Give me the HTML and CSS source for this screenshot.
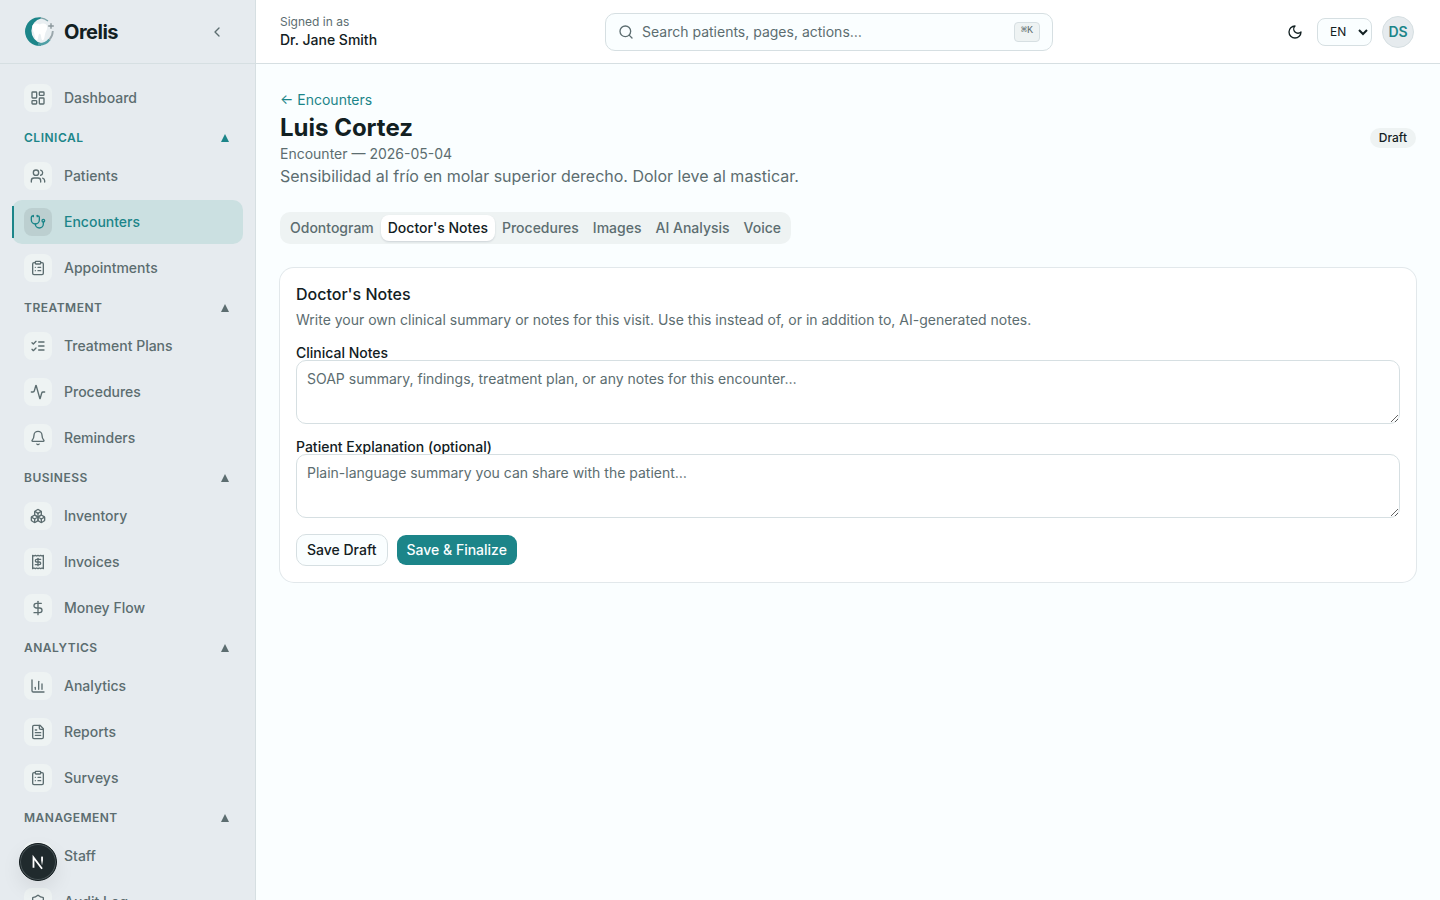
FILE: index.html
```html
<!DOCTYPE html>
<html lang="en">
<head>
  <meta charset="UTF-8">
  <meta name="viewport" content="width=device-width, initial-scale=1.0">
  <title>Orelis - Encounter</title>
  <link rel="stylesheet" href="styles.css">
</head>
<body>
  <div class="app">
    <aside class="sidebar">
      <div class="brand">
        <svg class="logo" viewBox="0 0 32 32" aria-hidden="true">
          <circle cx="16" cy="15" r="12" fill="#eaeff2"/>
          <path d="M17 1.300A14.300 14.300 0 1 0 17 29.700L17 27A12 12.500 0 0 1 17 2.500Z" fill="#1c8589"/>
          <path d="M14 28.300A13 13 0 0 0 25.500 23.500" fill="none" stroke="#4f9fa5" stroke-width="2.600"/>
          <path d="M25.300 23.800A13.400 13.400 0 0 0 28.800 15" fill="none" stroke="#9aa6ab" stroke-width="1.800"/>
          <path d="M16.500 1.900A13.800 13.800 0 0 1 24 5" fill="none" stroke="#7fa5aa" stroke-width="1.100"/>
          <path d="M15.700 8.500C13.500 7 8.500 6.800 8.200 11c-.2 2.800 1.600 4.500 2.200 7.300.5 2.600.8 6 2.300 6 1.800 0 1.200-6.500 3-6.500s1.200 6.500 3 6.500c1.500 0 1.800-3.400 2.300-6 .6-2.800 2.400-4.500 2.200-7.300-.3-4.200-5.300-4-7.500-2.500z" fill="#fff"/>
          <path d="M27 7.200v5.600M24.200 10h5.600" stroke="#8b979c" stroke-width="1.400"/>
        </svg>
        <span class="brand-name">Orelis</span>
        <button class="collapse" type="button" aria-label="Collapse sidebar">
          <svg class="icon" viewBox="0 0 24 24"><path d="m15 18-6-6 6-6"/></svg>
        </button>
      </div>

      <nav class="nav">
        <a class="nav-item" href="#">
          <span class="nav-icon"><svg class="icon" viewBox="0 0 24 24"><rect width="7" height="9" x="3" y="3" rx="1"/><rect width="7" height="5" x="14" y="3" rx="1"/><rect width="7" height="9" x="14" y="12" rx="1"/><rect width="7" height="5" x="3" y="16" rx="1"/></svg></span>
          Dashboard
        </a>

        <div class="nav-group">
          <button class="nav-heading current" type="button">Clinical <span class="caret"></span></button>
          <a class="nav-item" href="#">
            <span class="nav-icon"><svg class="icon" viewBox="0 0 24 24"><path d="M16 21v-2a4 4 0 0 0-4-4H6a4 4 0 0 0-4 4v2"/><circle cx="9" cy="7" r="4"/><path d="M22 21v-2a4 4 0 0 0-3-3.870"/><path d="M16 3.130a4 4 0 0 1 0 7.750"/></svg></span>
            Patients
          </a>
          <a class="nav-item active" href="#" aria-current="page">
            <span class="nav-icon"><svg class="icon" viewBox="0 0 24 24"><path d="M11 2v2"/><path d="M5 2v2"/><path d="M5 3H4a2 2 0 0 0-2 2v4a6 6 0 0 0 12 0V5a2 2 0 0 0-2-2h-1"/><path d="M8 15a6 6 0 0 0 12 0v-3"/><circle cx="20" cy="10" r="2"/></svg></span>
            Encounters
          </a>
          <a class="nav-item" href="#">
            <span class="nav-icon"><svg class="icon" viewBox="0 0 24 24"><rect width="8" height="4" x="8" y="2" rx="1"/><path d="M16 4h2a2 2 0 0 1 2 2v14a2 2 0 0 1-2 2H6a2 2 0 0 1-2-2V6a2 2 0 0 1 2-2h2"/><path d="M12 11h4"/><path d="M12 16h4"/><path d="M8 11h.01"/><path d="M8 16h.01"/></svg></span>
            Appointments
          </a>
        </div>

        <div class="nav-group">
          <button class="nav-heading" type="button">Treatment <span class="caret"></span></button>
          <a class="nav-item" href="#">
            <span class="nav-icon"><svg class="icon" viewBox="0 0 24 24"><path d="m3 17 2 2 4-4"/><path d="m3 7 2 2 4-4"/><path d="M13 6h8"/><path d="M13 12h8"/><path d="M13 18h8"/></svg></span>
            Treatment Plans
          </a>
          <a class="nav-item" href="#">
            <span class="nav-icon"><svg class="icon" viewBox="0 0 24 24"><path d="M22 12h-2.480a2 2 0 0 0-1.930 1.460l-2.350 8.360a.25.25 0 0 1-.48 0L9.240 2.180a.25.25 0 0 0-.48 0l-2.350 8.360A2 2 0 0 1 4.490 12H2"/></svg></span>
            Procedures
          </a>
          <a class="nav-item" href="#">
            <span class="nav-icon"><svg class="icon" viewBox="0 0 24 24"><path d="M10.268 21a2 2 0 0 0 3.464 0"/><path d="M3.262 15.326A1 1 0 0 0 4 17h16a1 1 0 0 0 .74-1.673C19.410 13.956 18 12.499 18 8A6 6 0 0 0 6 8c0 4.499-1.411 5.956-2.738 7.326"/></svg></span>
            Reminders
          </a>
        </div>

        <div class="nav-group">
          <button class="nav-heading" type="button">Business <span class="caret"></span></button>
          <a class="nav-item" href="#">
            <span class="nav-icon"><svg class="icon" viewBox="0 0 24 24"><path d="M2.970 12.920A2 2 0 0 0 2 14.630v3.240a2 2 0 0 0 .97 1.710l3 1.800a2 2 0 0 0 2.060 0L12 19v-5.500l-5-3-4.030 2.420Z"/><path d="m7 16.500-4.740-2.850"/><path d="m7 16.500 5-3"/><path d="M7 16.500v5.170"/><path d="M12 13.500V19l3.970 2.380a2 2 0 0 0 2.060 0l3-1.800a2 2 0 0 0 .97-1.710v-3.240a2 2 0 0 0-.97-1.710L17 10.500l-5 3Z"/><path d="m17 16.500-5-3"/><path d="m17 16.500 4.740-2.850"/><path d="M17 16.500v5.170"/><path d="M7.970 4.420A2 2 0 0 0 7 6.130v4.370l5 3 5-3V6.130a2 2 0 0 0-.97-1.710l-3-1.800a2 2 0 0 0-2.060 0l-3 1.800Z"/><path d="M12 8 7.260 5.150"/><path d="m12 8 4.740-2.850"/><path d="M12 13.500V8"/></svg></span>
            Inventory
          </a>
          <a class="nav-item" href="#">
            <span class="nav-icon"><svg class="icon" viewBox="0 0 24 24"><path d="M4 2v20l2-1 2 1 2-1 2 1 2-1 2 1 2-1 2 1V2l-2 1-2-1-2 1-2-1-2 1-2-1-2 1Z"/><path d="M16 8h-6a2 2 0 1 0 0 4h4a2 2 0 1 1 0 4H8"/><path d="M12 17.500v-11"/></svg></span>
            Invoices
          </a>
          <a class="nav-item" href="#">
            <span class="nav-icon"><svg class="icon" viewBox="0 0 24 24"><path d="M12 2v20"/><path d="M17 5H9.500a3.500 3.500 0 0 0 0 7h5a3.500 3.500 0 0 1 0 7H6"/></svg></span>
            Money Flow
          </a>
        </div>

        <div class="nav-group">
          <button class="nav-heading" type="button">Analytics <span class="caret"></span></button>
          <a class="nav-item" href="#">
            <span class="nav-icon"><svg class="icon" viewBox="0 0 24 24"><path d="M3 3v16a2 2 0 0 0 2 2h16"/><path d="M18 17V9"/><path d="M13 17V5"/><path d="M8 17v-3"/></svg></span>
            Analytics
          </a>
          <a class="nav-item" href="#">
            <span class="nav-icon"><svg class="icon" viewBox="0 0 24 24"><path d="M15 2H6a2 2 0 0 0-2 2v16a2 2 0 0 0 2 2h12a2 2 0 0 0 2-2V7Z"/><path d="M14 2v4a2 2 0 0 0 2 2h4"/><path d="M10 9H8"/><path d="M16 13H8"/><path d="M16 17H8"/></svg></span>
            Reports
          </a>
          <a class="nav-item" href="#">
            <span class="nav-icon"><svg class="icon" viewBox="0 0 24 24"><rect width="8" height="4" x="8" y="2" rx="1"/><path d="M16 4h2a2 2 0 0 1 2 2v14a2 2 0 0 1-2 2H6a2 2 0 0 1-2-2V6a2 2 0 0 1 2-2h2"/><path d="M12 11h4"/><path d="M12 16h4"/><path d="M8 11h.01"/><path d="M8 16h.01"/></svg></span>
            Surveys
          </a>
        </div>

        <div class="nav-group">
          <button class="nav-heading" type="button">Management <span class="caret"></span></button>
          <a class="nav-item" href="#">
            <span class="nav-icon"><svg class="icon" viewBox="0 0 24 24"><circle cx="12" cy="8" r="4"/><path d="M4 21a8 8 0 0 1 16 0"/></svg></span>
            Staff
          </a>
          <a class="nav-item" href="#">
            <span class="nav-icon"><svg class="icon" viewBox="0 0 24 24"><path d="M20 13c0 5-3.500 7.500-7.660 8.950a1 1 0 0 1-.67-.01C7.500 20.500 4 18 4 13V6a1 1 0 0 1 1-1c2 0 4.500-1.200 6.240-2.720a1.170 1.170 0 0 1 1.520 0C14.510 3.810 17 5 19 5a1 1 0 0 1 1 1z"/></svg></span>
            Audit Log
          </a>
        </div>
      </nav>
    </aside>

    <div class="content">
      <header class="topbar">
        <div class="signed-in">
          <span class="signed-label">Signed in as</span>
          <span class="signed-name">Dr. Jane Smith</span>
        </div>

        <label class="search">
          <svg class="icon" viewBox="0 0 24 24"><circle cx="11" cy="11" r="8"/><path d="m21 21-4.300-4.300"/></svg>
          <input type="text" placeholder="Search patients, pages, actions…" aria-label="Search">
          <kbd>⌘K</kbd>
        </label>

        <div class="tools">
          <button class="theme" type="button" aria-label="Toggle theme">
            <svg class="icon" viewBox="0 0 24 24"><path d="M12 3a6 6 0 0 0 9 9 9 9 0 1 1-9-9Z"/></svg>
          </button>
          <select class="language" aria-label="Language">
            <option>EN</option>
            <option>ES</option>
          </select>
          <button class="account" type="button" aria-label="Account"><span class="avatar">DS</span></button>
        </div>
      </header>

      <main class="main">
        <div class="page-head">
          <div>
            <a class="back" href="#">← Encounters</a>
            <h1>Luis Cortez</h1>
            <p class="meta">Encounter — 2026-05-04</p>
            <p class="reason">Sensibilidad al frío en molar superior derecho. Dolor leve al masticar.</p>
          </div>
          <span class="badge">Draft</span>
        </div>

        <div class="tabs" role="tablist">
          <button class="tab" type="button" role="tab">Odontogram</button>
          <button class="tab selected" type="button" role="tab" aria-selected="true">Doctor's Notes</button>
          <button class="tab" type="button" role="tab">Procedures</button>
          <button class="tab" type="button" role="tab">Images</button>
          <button class="tab" type="button" role="tab">AI Analysis</button>
          <button class="tab" type="button" role="tab">Voice</button>
        </div>

        <form class="card">
          <div class="card-head">
            <h2>Doctor's Notes</h2>
            <p>Write your own clinical summary or notes for this visit. Use this instead of, or in addition to, AI-generated notes.</p>
          </div>
          <div class="field">
            <label for="clinical-notes">Clinical Notes</label>
            <textarea id="clinical-notes" placeholder="SOAP summary, findings, treatment plan, or any notes for this encounter…"></textarea>
          </div>
          <div class="field">
            <label for="explanation">Patient Explanation (optional)</label>
            <textarea id="explanation" placeholder="Plain-language summary you can share with the patient…"></textarea>
          </div>
          <div class="actions">
            <button class="btn outline" type="button">Save Draft</button>
            <button class="btn primary" type="button">Save &amp; Finalize</button>
          </div>
        </form>
      </main>
    </div>
  </div>

  <button class="dev-badge" type="button" aria-label="Open dev tools">
    <svg viewBox="0 0 40 40" aria-hidden="true">
      <defs>
        <linearGradient id="fade" x1="0" y1="0" x2="0" y2="1">
          <stop offset="0.4" stop-color="#fff"/>
          <stop offset="1" stop-color="#fff" stop-opacity="0"/>
        </linearGradient>
      </defs>
      <path d="M15 26.500V15L24.500 27.500" fill="none" stroke="#fff" stroke-width="2"/>
      <rect x="23.500" y="14" width="2" height="10" fill="url(#fade)"/>
    </svg>
  </button>
</body>
</html>
```
FILE: styles.css
```css
:root {
  --bg: #fafeff;
  --text: #122022;
  --muted-text: #5c6d70;
  --muted: #eef3f3;
  --border: #d6dfe2;
  --teal: #1c8589;
  --side: #e6ebef;
}

* {
  box-sizing: border-box;
}

body {
  margin: 0;
  font-family: Inter, "Liberation Sans", sans-serif;
  font-size: 14px;
  line-height: 20px;
  color: var(--text);
  background: var(--bg);
}

button, input, select, textarea {
  font: inherit;
  color: inherit;
}

button {
  cursor: pointer;
}

a {
  text-decoration: none;
}

h1, h2, p {
  margin: 0;
}

.app {
  display: flex;
  height: 100vh;
  overflow: hidden;
}

.icon {
  width: 16px;
  height: 16px;
  flex-shrink: 0;
  fill: none;
  stroke: currentColor;
  stroke-width: 2;
  stroke-linecap: round;
  stroke-linejoin: round;
}

/* Sidebar */
.sidebar {
  display: flex;
  flex-direction: column;
  width: 256px;
  flex-shrink: 0;
  background: var(--side);
  border-right: 1px solid var(--border);
}

.brand {
  display: flex;
  align-items: center;
  gap: 8px;
  height: 64px;
  flex-shrink: 0;
  padding: 0 24px;
  border-bottom: 1px solid var(--border);
}

.logo {
  width: 32px;
  height: 32px;
}

.brand-name {
  flex: 1;
  font-size: 20px;
  line-height: 28px;
  font-weight: 700;
  letter-spacing: -0.5px;
}

.collapse, .theme {
  display: flex;
  align-items: center;
  justify-content: center;
  width: 28px;
  height: 28px;
  padding: 0;
  border: 0;
  background: none;
}

.collapse {
  color: var(--muted-text);
}

.nav {
  display: flex;
  flex-direction: column;
  gap: 2px;
  padding: 12px;
  overflow-x: hidden;
  overflow-y: auto;
  scrollbar-width: none;
}

.nav-group {
  display: flex;
  flex-direction: column;
  flex-shrink: 0;
  gap: 2px;
}

.nav-item {
  display: flex;
  align-items: center;
  gap: 12px;
  height: 44px;
  flex-shrink: 0;
  padding: 0 12px;
  border-radius: 10px;
  color: var(--muted-text);
  font-weight: 500;
}

.nav-icon {
  display: flex;
  align-items: center;
  justify-content: center;
  width: 28px;
  height: 28px;
  border-radius: 8px;
  background: var(--muted);
}

.nav-item.active {
  position: relative;
  background: #cbe0e1;
  color: var(--teal);
}

.nav-item.active::before {
  content: "";
  position: absolute;
  left: 0;
  top: 6px;
  bottom: 6px;
  width: 2px;
  background: var(--teal);
}

.nav-item.active .nav-icon {
  background: #bccfd0;
}

.nav-heading {
  display: flex;
  align-items: center;
  justify-content: space-between;
  height: 32px;
  margin-bottom: -2px;
  padding: 0 12px;
  border: 0;
  background: none;
  color: var(--muted-text);
  font-size: 12px;
  line-height: 16px;
  font-weight: 600;
  letter-spacing: 0.5px;
  text-transform: uppercase;
}

.nav-heading.current {
  color: var(--teal);
}

.caret {
  margin-right: 2px;
  border: 4px solid transparent;
  border-top: 0;
  border-bottom: 8px solid currentColor;
}

/* Top bar */
.content {
  display: flex;
  flex-direction: column;
  flex: 1;
  min-width: 0;
}

.topbar {
  display: flex;
  align-items: center;
  justify-content: space-between;
  height: 64px;
  flex-shrink: 0;
  padding: 0 24px;
  background: #fff;
  border-bottom: 1px solid var(--border);
}

.signed-in {
  display: flex;
  flex-direction: column;
}

.signed-label {
  font-size: 12px;
  line-height: 16px;
  color: var(--muted-text);
}

.signed-name {
  font-weight: 500;
}

.search {
  display: flex;
  align-items: center;
  gap: 8px;
  width: 448px;
  height: 38px;
  padding: 0 12px;
  border: 1px solid var(--border);
  border-radius: 10px;
  background: var(--bg);
  color: var(--muted-text);
}

.search input {
  flex: 1;
  min-width: 0;
  padding: 0;
  border: 0;
  outline: 0;
  background: none;
}

.search input::placeholder, textarea::placeholder {
  color: var(--muted-text);
  opacity: 1;
}

.search kbd {
  height: 20px;
  padding: 0 6px;
  border: 1px solid var(--border);
  border-radius: 4px;
  background: var(--muted);
  font-family: "Liberation Mono", "DejaVu Sans Mono", monospace;
  font-size: 10px;
  line-height: 16px;
}

.tools {
  display: flex;
  align-items: center;
  gap: 8px;
}

.language {
  width: 55px;
  height: 28px;
  padding: 0 0 0 8px;
  border: 1px solid var(--border);
  border-radius: 8px;
  background: var(--bg);
  font-size: 12px;
}

.account {
  padding: 2px;
  border: 0;
  background: none;
}

.avatar {
  display: flex;
  align-items: center;
  justify-content: center;
  width: 32px;
  height: 32px;
  border: 1px solid var(--border);
  border-radius: 50%;
  background: #e6ebee;
  color: var(--teal);
  font-weight: 600;
}

/* Page */
.main {
  display: flex;
  flex-direction: column;
  gap: 24px;
  padding: 24px;
  overflow-y: auto;
}

.page-head {
  display: flex;
  align-items: center;
  justify-content: space-between;
}

.back {
  display: block;
  line-height: 24px;
  color: var(--teal);
}

h1 {
  font-size: 24px;
  line-height: 32px;
  font-weight: 700;
}

.meta {
  color: var(--muted-text);
}

.reason {
  font-size: 16px;
  line-height: 24px;
  color: var(--muted-text);
}

.badge {
  padding: 2px 9px;
  border-radius: 10px;
  background: var(--muted);
  font-size: 12px;
  line-height: 16px;
  font-weight: 500;
}

.tabs {
  display: flex;
  align-items: center;
  align-self: flex-start;
  height: 32px;
  padding: 3px;
  border-radius: 10px;
  background: var(--muted);
}

.tab {
  height: 26px;
  padding: 0 6px;
  border: 1px solid transparent;
  border-radius: 8px;
  background: none;
  color: var(--muted-text);
  font-weight: 500;
}

.tab.selected {
  background: #fff;
  color: var(--text);
  box-shadow: 0 1px 2px rgba(18, 32, 60, 0.15);
}

.card {
  display: flex;
  flex-direction: column;
  gap: 16px;
  padding: 16px;
  border-radius: 14px;
  background: #fff;
  box-shadow: 0 0 0 1px #e2e8eb;
}

.card-head {
  display: flex;
  flex-direction: column;
  gap: 6px;
}

.card-head h2 {
  font-size: 16px;
  line-height: 20px;
  font-weight: 500;
}

.card-head p {
  color: var(--muted-text);
}

.field {
  display: flex;
  flex-direction: column;
}

.field label {
  line-height: 14px;
  font-weight: 500;
}

.field textarea {
  height: 64px;
  padding: 8px 10px;
  border: 1px solid var(--border);
  border-radius: 10px;
  background: #fff;
  resize: vertical;
}

.actions {
  display: flex;
  gap: 8px;
}

.btn {
  height: 32px;
  padding: 0 10px;
  border: 1px solid transparent;
  border-radius: 10px;
  background-clip: padding-box;
  font-weight: 500;
}

.btn.outline {
  border-color: var(--border);
  background-color: var(--bg);
}

.btn.primary {
  background-color: var(--teal);
  color: #fafeff;
}

.dev-badge {
  position: fixed;
  left: 19px;
  bottom: 19px;
  width: 38px;
  height: 38px;
  padding: 0;
  border: 1px solid #111a1d;
  border-radius: 50%;
  background: #202a2d;
  box-shadow: inset 0 0 0 1px #4a5558, 0 8px 20px rgba(0, 0, 0, 0.08);
}

.dev-badge svg {
  display: block;
  width: 36px;
  height: 36px;
}
```
